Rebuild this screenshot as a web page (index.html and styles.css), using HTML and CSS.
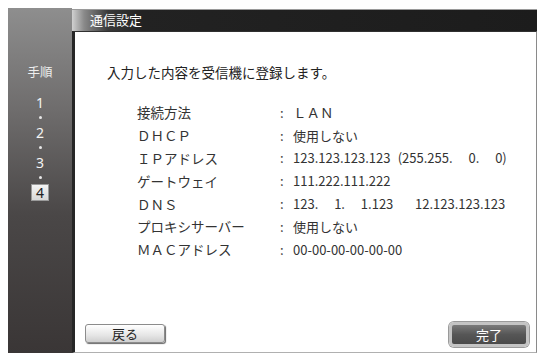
FILE: index.html
```html
<!DOCTYPE html>
<html lang="ja">
<head>
<meta charset="utf-8">
<link rel="stylesheet" href="styles.css">
</head>
<body>
<div class="screen">
  <aside class="steps">
    <div class="steps-title">手順</div>
    <div class="step">1</div>
    <div class="dot"></div>
    <div class="step">2</div>
    <div class="dot"></div>
    <div class="step">3</div>
    <div class="dot"></div>
    <div class="step current">4</div>
  </aside>
  <div class="window">
    <header class="titlebar">通信設定</header>
    <section class="content">
      <p class="message">入力した内容を受信機に登録します。</p>
      <div class="settings">
        <div class="label">接続方法</div><div class="colon">:</div><div class="value wide">ＬＡＮ</div>
        <div class="label">ＤＨＣＰ</div><div class="colon">:</div><div class="value">使用しない</div>
        <div class="label">ＩＰアドレス</div><div class="colon">:</div><div class="value">123.123.123.123&#8199;(255.255.&#8199;&#8199;&#8239;0.&#8199;&#8199;&#8239;0)</div>
        <div class="label">ゲートウェイ</div><div class="colon">:</div><div class="value">111.222.111.222</div>
        <div class="label">ＤＮＳ</div><div class="colon">:</div><div class="value">123.&#8199;&#8199;&#8239;1.&#8199;&#8199;&#8239;1.123&#8199;&#8199;&#8199;12.123.123.123</div>
        <div class="label">プロキシサーバー</div><div class="colon">:</div><div class="value">使用しない</div>
        <div class="label">ＭＡＣアドレス</div><div class="colon">:</div><div class="value">00-00-00-00-00-00</div>
      </div>
      <div class="buttons">
        <button class="btn back">戻る</button>
        <button class="btn done">完了</button>
      </div>
    </section>
  </div>
</div>
</body>
</html>
```
FILE: styles.css
```css
html, body {
  margin: 0;
  padding: 0;
  background: #ffffff;
}
body {
  font-family: "Noto Sans CJK JP", "Noto Sans", sans-serif;
  color: #222;
}
.screen {
  width: 540px;
  height: 356px;
  box-sizing: border-box;
  padding: 8px 3px 3px 8px;
  display: flex;
}
.steps {
  width: 64px;
  height: 345px;
  background: linear-gradient(180deg, #8e8e8e 0%, #6e6c6c 30%, #4a4747 60%, #3a3636 100%);
  display: flex;
  flex-direction: column;
  align-items: center;
  color: #f2f2f2;
  padding-top: 55px;
  box-sizing: border-box;
}
.steps-title {
  font-size: 12.5px;
  line-height: 18px;
  margin-bottom: 15px;
  color: #eeeeee;
}
.step {
  font-size: 14px;
  line-height: 14px;
  height: 14px;
  font-family: "Noto Sans", sans-serif;
  color: #f4f4f4;
}
.dot {
  width: 3px;
  height: 3px;
  border-radius: 50%;
  background: #e8e8e8;
  margin: 6px 0 7px;
}
.step.current {
  background: linear-gradient(#f4f4f4, #d8d8d8);
  color: #222;
  border: 1px solid #9a9a9a;
  width: 16px;
  height: 15px;
  line-height: 15px;
  text-align: center;
  margin-top: -2px;
}
.window {
  flex: 1;
  display: flex;
  flex-direction: column;
}
.titlebar {
  height: 22px;
  margin-top: 1px;
  background: linear-gradient(90deg, #d0d0d0 0px, #8a8a8a 12px, #3a3a3a 36px, #222 70px, #1c1c1c 100%);
  border-top: 1px solid #9a9a9a;
  box-sizing: border-box;
  color: #ffffff;
  font-size: 13px;
  line-height: 20px;
  padding-left: 18px;
}
.content {
  flex: 1;
  background: #ffffff;
  border-left: 3px solid #262626;
  border-top: 1px solid #303030;
  border-right: 1px solid #8a8a8a;
  border-bottom: 1px solid #b0b0b0;
  display: flex;
  flex-direction: column;
  padding: 0 7px 5px 10px;
}
.message {
  margin: 30px 0 0 22px;
  font-size: 13.5px;
  line-height: 20px;
  color: #222;
}
.settings {
  margin: 19px 0 0 52px;
  display: grid;
  grid-template-columns: 143px 13px auto;
  grid-auto-rows: 22.8px;
  align-items: center;
}
.label {
  font-size: 13.5px;
  color: #333;
  white-space: nowrap;
}
.colon {
  font-size: 13px;
  color: #444;
}
.value {
  font-size: 13px;
  color: #333;
  white-space: nowrap;
}
.value.wide {
  font-size: 13.5px;
}
.buttons {
  margin-top: auto;
  display: flex;
  justify-content: space-between;
  align-items: center;
}
.btn {
  font-family: "Noto Sans CJK JP", sans-serif;
  font-size: 13px;
  width: 80px;
  padding: 0;
  border-radius: 3px;
  cursor: pointer;
}
.back {
  height: 19px;
  line-height: 17px;
  background: linear-gradient(#ffffff, #e6e6e6 60%, #cfcfcf);
  border: 1px solid #8c8c8c;
  box-shadow: 1px 1px 1px #6a6a6a;
  color: #222;
  margin-bottom: 2px;
}
.done {
  height: 25px;
  line-height: 19px;
  background: linear-gradient(#7a7a7a, #565656 50%, #4a4a4a);
  border: 3px solid #c4c4c4;
  border-radius: 5px;
  box-shadow: 0 0 0 1px #9a9a9a;
  color: #ffffff;
}
```
